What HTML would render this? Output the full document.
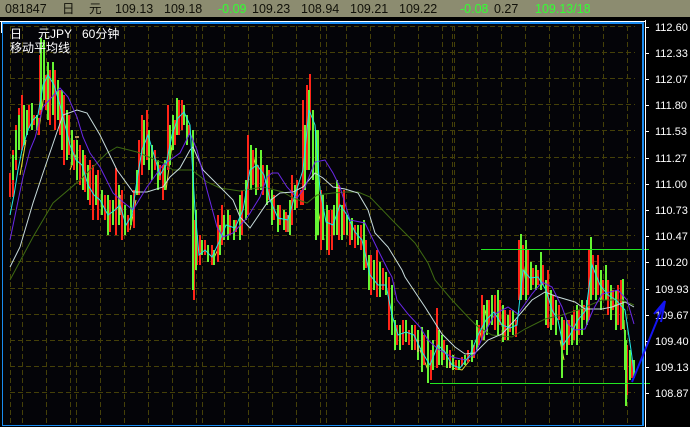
<!DOCTYPE html>
<html><head><meta charset="utf-8"><style>
html,body{margin:0;padding:0;background:#000;width:690px;height:427px;overflow:hidden}
svg{display:block}
text{font-family:"Liberation Sans","Noto Sans CJK SC",sans-serif}
.t{font-size:12.5px;fill:#111109}
.g{font-size:12.5px;fill:#33ff33}
.a{font-size:11px;fill:#fff}
.w{font-size:12px;fill:#fff}
</style></head><body>
<svg width="690" height="427" viewBox="0 0 690 427" xmlns="http://www.w3.org/2000/svg">
<rect width="690" height="427" fill="#000"/>
<rect width="690" height="17" fill="#8c8c70"/>
<rect x="0" y="21" width="646" height="1" fill="#fff"/>
<rect x="645" y="20" width="1" height="407" fill="#fff"/>
<rect x="1" y="21" width="1" height="12" fill="#fff"/>
<rect x="2" y="22" width="642" height="404" fill="#1a8cf0"/>
<rect x="3" y="24" width="639" height="401" fill="#040408"/>
<g stroke="#454008" stroke-width="1" stroke-dasharray="5 3" fill="none" shape-rendering="crispEdges">
<path d="M10 26.5H635M10 52.5H635M10 78.5H635M10 104.5H635M10 130.5H635M10 157.5H635M10 183.5H635M10 209.5H635M10 235.5H635M10 261.5H635M10 288.5H635M10 314.5H635M10 340.5H635M10 366.5H635M10 392.5H635"/>
<path d="M10.5 26V425M22.5 26V425M46.5 26V425M70.5 26V425M76.5 26V425M100.5 26V425M124.5 26V425M148.5 26V425M172.5 26V425M196.5 26V425M202.5 26V425M224.5 26V425M248.5 26V425M272.5 26V425M296.5 26V425M320.5 26V425M326.5 26V425M346.5 26V425M370.5 26V425M394.5 26V425M418.5 26V425M442.5 26V425M452.5 26V425M454.5 26V425M477.5 26V425M501.5 26V425M525.5 26V425M549.5 26V425M573.5 26V425M579.5 26V425M603.5 26V425M627.5 26V425"/>
</g>
<path stroke="#e8e030" stroke-width="1" fill="none" d="M20 175L26 140M38 135L44 95M70 170L78 150M130 230L136 200M166 190L172 145M212 262L220 245M250 180L256 155M302 200L307 120M318 210L324 240M420 350L428 370M452 368L462 370L470 360M478 345L486 310M522 290L527 255M560 340L564 360M612 310L618 300M624 320L626 380M630 350L632 375"/>
<path stroke="#ff2418" stroke-width="2" shape-rendering="crispEdges" fill="none" d="M10 173V197M13 150V197M16 125V170M19 108V145M22 95V150M29 105V128M34 115V125M39 118V135M40 55V115M46 75V110M50 70V125M55 70V130M60 90V135M64 95V165M69 115V155M74 140V170M80 145V185M85 155V192M90 160V205M93 165V220M98 170V220M105 195V220M110 200V232M116 168V235M122 190V240M128 215V232M134 190V228M139 140V195M142 115V175M147 110V160M155 150V170M160 165V180M163 165V200M168 105V170M175 120V145M179 100V135M182 100V130M189 125V135M194 220V300M197 235V265M200 235V265M205 240V255M212 245V265M218 215V262M222 205V245M230 215V235M236 220V232M242 190V235M248 135V215M253 150V185M258 165V190M263 165V195M269 170V200M274 195V220M280 205V225M286 212V232M292 175V225M297 180V208M301 190V205M303 100V205M307 85V170M310 74V130M321 190V250M329 210V255M332 210V250M339 185V240M344 190V235M350 222V245M355 225V248M361 225V250M366 240V268M371 255V295M377 250V297M383 268V290M389 277V330M397 325V345M403 320V345M409 330V345M415 325V350M424 335V365M431 350V380M437 308V368M444 340V360M450 350V368M456 360V370M462 357V366M468 350V362M474 345V358M479 325V345M482 295V340M489 300V325M495 295V330M500 300V325M505 310V340M510 310V332M516 320V337M519 240V300M523 245V295M528 250V295M533 268V285M538 270V285M543 265V285M548 270V328M553 295V325M559 305V320M564 320V350M569 320V345M574 310V340M579 310V335M584 305V320M589 250V320M593 255V295M598 255V295M603 280V300M608 280V315M613 290V310M618 285V325M621 280V330M627 345V395M632 360V378"/>
<path stroke="#66f533" stroke-width="2" shape-rendering="crispEdges" fill="none" d="M13 155V180M16 130V160M19 115V150M24 105V145M27 110V135M32 103V130M37 115V130M41 38V110M44 40V100M48 62V120M53 62V115M58 80V120M62 90V150M67 110V160M72 130V165M77 140V180M83 150V190M88 165V200M96 175V205M102 190V215M108 195V235M113 200V225M119 185V225M125 205V235M131 195V225M137 170V195M144 120V165M149 130V170M152 145V180M158 160V190M165 160V190M170 125V165M173 115V150M177 98V135M184 105V125M187 115V145M193 130V290M196 210V270M202 240V255M208 245V262M214 250V265M220 225V255M224 215V240M228 210V240M234 220V240M240 195V240M246 180V220M251 145V190M256 148V195M261 150V190M267 165V205M272 190V225M278 205V232M284 210V230M290 200V235M295 185V210M305 125V190M309 90V170M313 110V180M316 130V240M318 130V235M323 195V240M327 205V250M334 205V235M337 180V235M342 205V240M347 215V235M352 218V240M358 225V245M364 220V270M369 255V290M374 260V290M380 262V297M386 272V295M392 285V335M395 320V350M400 325V350M406 320V342M412 325V350M418 330V360M422 327V372M428 330V383M433 340V370M439 330V365M442 335V365M447 345V368M453 355V370M459 360V370M465 355V365M472 340V362M477 320V350M484 305V340M487 300V335M492 295V325M498 290V335M503 305V342M508 315V340M513 310V335M521 234V300M526 240V300M531 262V290M536 265V290M541 252V290M546 280V325M551 290V330M556 300V335M562 317V378M567 320V355M572 315V345M577 305V345M582 300V335M587 300V325M591 237V300M596 265V300M601 270V310M606 265V300M611 285V320M616 290V330M623 279V329M625 330V370M626 340V406M630 350V380M634 360V378"/>
<path stroke="#f0c070" stroke-width="1.4" fill="none" d="M75 137H79M288 215V232M120 195V215M418 340V352M450 362V368"/>
<polyline fill="none" stroke="#3e6a12" stroke-width="1" points="10,280 33,237 53,203 80,180 107,153 117,147 137,152 163,163 173,170 192,170 207,182 220,188 240,191 263,187 283,192 293,198 307,203 317,195 333,193 345,192 358,192 370,197 395,223 415,243 428,263 435,280 452,300 468,317 478,327 492,335 512,337 525,329 545,319 562,315 578,310 602,300 622,300 634,305"/>
<polyline fill="none" stroke="#c8dcdc" stroke-width="1" points="10,267 20,247 33,203 43,173 57,132 63,115 77,110 87,113 100,135 117,170 133,192 147,192 163,187 170,177 180,168 190,150 193,147 203,170 220,187 233,200 240,217 250,228 267,203 280,193 293,192 303,187 315,173 323,178 333,187 345,189 358,193 368,210 375,233 388,247 402,270 405,277 425,307 442,334 455,347 465,354 475,353 488,340 502,334 515,320 532,300 545,292 558,297 575,302 585,309 602,309 612,307 625,302 634,307"/>
<polyline fill="none" stroke="#6a28e8" stroke-width="1" points="10,240 23,177 30,150 35,138 43,107 60,88 68,97 77,117 83,137 90,153 100,167 113,193 123,202 133,210 147,187 163,165 180,153 190,133 197,150 207,190 217,227 223,237 233,233 247,218 260,197 267,177 272,173 278,173 287,187 297,198 305,187 315,162 325,160 333,173 340,187 350,220 365,223 378,250 388,270 392,277 397,300 408,314 420,327 428,340 438,349 452,357 465,360 475,354 485,332 495,314 508,307 518,314 532,294 542,282 552,287 562,307 568,324 575,330 585,329 593,310 602,294 618,290 627,300 634,324"/>
<polyline fill="none" stroke="#22e8e8" stroke-width="1" points="10,215 14,195 18,170 22,150 28,130 33,120 38,115 43,85 48,75 54,85 60,105 65,125 70,145 76,160 82,165 88,185 94,195 100,200 108,215 115,210 120,205 126,225 132,215 137,180 142,150 148,135 154,155 160,175 166,165 172,135 178,118 184,112 190,125 195,210 199,255 205,250 212,257 220,240 226,225 235,228 243,210 250,170 257,165 264,175 270,200 278,218 288,220 295,195 303,170 309,110 315,125 320,190 326,222 333,225 340,205 347,215 355,232 362,240 370,275 378,285 386,285 392,315 398,335 406,332 414,335 422,352 430,365 438,345 445,352 452,365 460,368 470,355 478,335 486,320 494,312 502,325 510,328 517,325 523,270 530,278 538,277 546,290 552,310 558,320 563,345 570,335 578,320 586,310 592,265 600,285 608,295 616,300 625,310 631,350 634,372"/>
<path stroke="#22e622" stroke-width="1" shape-rendering="crispEdges" fill="none" d="M481 249.5H649M430 383.5H650"/>
<rect x="642" y="22" width="2" height="404" fill="#1a8cf0"/>
<rect x="645" y="20" width="1" height="407" fill="#fff"/>
<path stroke="#fff" stroke-width="1" fill="none" shape-rendering="crispEdges" d="M646 27.5H649M646 53.5H649M646 79.5H649M646 105.5H649M646 131.5H649M646 158.5H649M646 184.5H649M646 210.5H649M646 236.5H649M646 262.5H649M646 289.5H649M646 315.5H649M646 341.5H649M646 367.5H649M646 393.5H649"/>
<g class="tx">
<text class="t" x="5" y="13">081847</text>
<text class="t" x="62" y="13">日</text>
<text class="t" x="89" y="13">元</text>
<text class="t" x="115" y="13">109.13</text>
<text class="t" x="164" y="13">109.18</text>
<text class="g" x="218" y="13">-0.09</text>
<text class="t" x="252" y="13">109.23</text>
<text class="t" x="301" y="13">108.94</text>
<text class="t" x="350" y="13">109.21</text>
<text class="t" x="399" y="13">109.22</text>
<text class="g" x="460" y="13">-0.08</text>
<text class="t" x="494" y="13">0.27</text>
<text class="g" x="535" y="13">109.13/18</text>
<text class="a" x="655" y="31">112.60</text>
<text class="a" x="655" y="57">112.33</text>
<text class="a" x="655" y="83">112.07</text>
<text class="a" x="655" y="109">111.80</text>
<text class="a" x="655" y="135">111.53</text>
<text class="a" x="655" y="162">111.27</text>
<text class="a" x="655" y="188">111.00</text>
<text class="a" x="655" y="214">110.73</text>
<text class="a" x="655" y="240">110.47</text>
<text class="a" x="655" y="266">110.20</text>
<text class="a" x="655" y="293">109.93</text>
<text class="a" x="655" y="319">109.67</text>
<text class="a" x="655" y="345">109.40</text>
<text class="a" x="655" y="371">109.13</text>
<text class="a" x="655" y="397">108.87</text>
<text class="w" x="10" y="38">日</text>
<text class="w" x="38" y="38">元JPY</text>
<text class="w" x="82" y="38">60分钟</text>
<text class="w" x="10" y="52">移动平均线</text>
</g>
<path stroke="#1414f0" stroke-width="2" fill="none" d="M632 382L665 301M665 301L654 314M665 301L658 318M665 301L661 322M656 312L664 306"/>
</svg>
</body></html>
